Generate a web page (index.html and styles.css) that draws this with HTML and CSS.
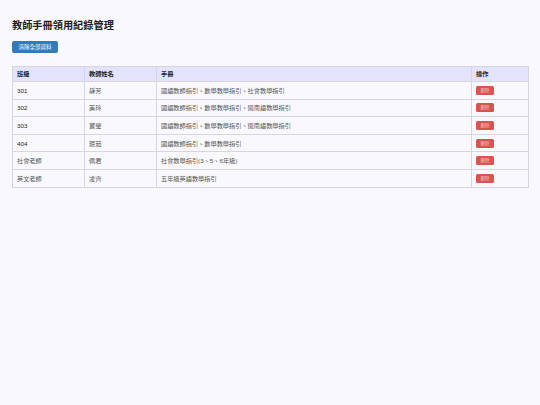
FILE: index.html
```html
<!DOCTYPE html>
<html lang="zh-Hant">
<head>
<meta charset="utf-8">
<title>教師手冊領用紀錄管理</title>
<link rel="stylesheet" href="styles.css">
</head>
<body>
<main class="page">
  <h1 class="title">教師手冊領用紀錄管理</h1>
  <div class="toolbar">
    <button class="btn btn-clear">清除全部資料</button>
  </div>
  <table class="records">
    <colgroup>
      <col class="c-class">
      <col class="c-name">
      <col class="c-book">
      <col class="c-op">
    </colgroup>
    <thead>
      <tr><th>班級</th><th>教師姓名</th><th>手冊</th><th>操作</th></tr>
    </thead>
    <tbody>
      <tr><td class="cls">301</td><td>靜芳</td><td>國語教師指引、數學教學指引、社會教學指引</td><td><button class="btn btn-del">刪除</button></td></tr>
      <tr><td class="cls">302</td><td>美玲</td><td>國語教師指引、數學教學指引、閩南語教學指引</td><td><button class="btn btn-del">刪除</button></td></tr>
      <tr><td class="cls">303</td><td>寶瑩</td><td>國語教師指引、數學教學指引、閩南語教學指引</td><td><button class="btn btn-del">刪除</button></td></tr>
      <tr><td class="cls">404</td><td>珉茹</td><td>國語教師指引、數學教學指引</td><td><button class="btn btn-del">刪除</button></td></tr>
      <tr><td>社會老師</td><td>佩君</td><td>社會教學指引(3、5、6年級)</td><td><button class="btn btn-del">刪除</button></td></tr>
      <tr><td>英文老師</td><td>凌齊</td><td>五年級英語教學指引</td><td><button class="btn btn-del">刪除</button></td></tr>
    </tbody>
  </table>
</main>
</body>
</html>
```

FILE: styles.css
```css
html, body {
  margin: 0;
  padding: 0;
  background: #f8f8fd;
}
body {
  font-family: "Liberation Sans", "Noto Sans CJK TC", sans-serif;
  color: #333;
}
.page {
  padding: 20px 12px 0 12px;
}
.title {
  margin: 0;
  font-size: 10.2px;
  line-height: 12px;
  font-weight: bold;
  color: #222;
}
.toolbar {
  margin-top: 9px;
  display: flex;
}
.btn {
  font-family: "Liberation Sans", "Noto Sans CJK TC", sans-serif;
  border: none;
  cursor: pointer;
  padding: 0;
  color: #fff;
}
.btn-clear {
  background: #337ab7;
  border-radius: 2px;
  width: 46px;
  height: 12px;
  font-size: 5.5px;
  line-height: 12px;
}
.records {
  margin-top: 13px;
  width: 516px;
  table-layout: fixed;
  border-collapse: collapse;
  font-size: 6.2px;
  background: #f9f9fd;
}
.c-class { width: 72px; }
.c-name { width: 72px; }
.c-book { width: 315px; }
.c-op { width: 57px; }
.records th,
.records td {
  border: 1px solid #d6d6e2;
  text-align: left;
  white-space: nowrap;
  overflow: hidden;
}
.records th {
  background: #e3e3fb;
  color: #222;
  font-weight: bold;
  line-height: 8px;
  padding: 3px 4px;
}
.records td {
  color: #555;
  line-height: 9px;
  padding: 3.8px 4px;
}
.records td.cls {
  color: #222;
}
.btn-del {
  background: #d9534f;
  border-radius: 1.5px;
  width: 18px;
  height: 9px;
  font-size: 4.5px;
  line-height: 9px;
  color: #f6c9c8;
  display: block;
}
```
